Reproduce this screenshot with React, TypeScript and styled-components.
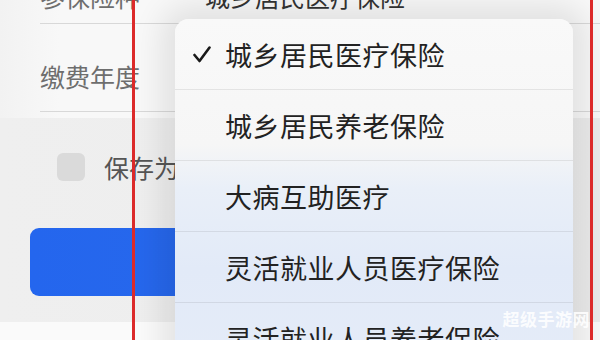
import React from "react";
import styled, { createGlobalStyle } from "styled-components";

const GlobalStyle = createGlobalStyle`
  html, body {
    margin: 0;
    padding: 0;
  }
  body {
    font-family: "Noto Sans CJK SC", "Noto Sans", sans-serif;
    background: #eeeeee;
  }
`;

const Screen = styled.div`
  position: relative;
  width: 600px;
  height: 340px;
  overflow: hidden;
  background: #eeeeee;
  display: flex;
  flex-direction: column;
`;

const FormCard = styled.div`
  margin-top: -32px;
  padding-bottom: 6px;
  background: linear-gradient(90deg, #f2f2f2 0px, #f8f8f8 60px, #f8f8f8 100%);
`;

const FieldRow = styled.div<{ $height: number; $offset?: number }>`
  display: flex;
  align-items: center;
  box-sizing: border-box;
  height: ${(p) => p.$height}px;
  padding-top: ${(p) => p.$offset ?? 0}px;
  padding-right: 52px;
  margin-left: 40px;
  border-bottom: 1px solid #d8d8d8;
`;

const Label = styled.span`
  flex-shrink: 0;
  width: 165px;
  font-size: 25px;
  color: #6e6e6e;
`;

const Value = styled.span`
  flex: 1;
  font-size: 25px;
  color: #333333;
`;

const OptionsArea = styled.div`
  display: flex;
  flex-direction: column;
  gap: 47px;
  padding: 35px 30px 26px;
  background: linear-gradient(90deg, #efefef 0px, #ececec 100%);
`;

const CheckRow = styled.label`
  display: flex;
  align-items: center;
  gap: 19px;
  height: 28px;
  padding-left: 27px;
`;

const Checkbox = styled.span`
  width: 28px;
  height: 28px;
  border-radius: 6px;
  background: #dadada;
`;

const CheckText = styled.span`
  font-size: 25px;
  color: #555555;
`;

const SubmitButton = styled.button`
  height: 68px;
  border: none;
  border-radius: 9px;
  background: linear-gradient(90deg, #2466ee 0%, #2d6be6 100%);
`;

const Footer = styled.div`
  flex: 1;
  background: #fafafa;
`;

const Menu = styled.div`
  position: absolute;
  left: 175px;
  top: 19px;
  width: 398px;
  height: 400px;
  border-radius: 14px;
  overflow: hidden;
  background: linear-gradient(
    180deg,
    #f9f9f9 0px,
    #f6f6f6 125px,
    #e9eff8 170px,
    #e2eaf8 250px,
    #e5ecf8 360px
  );
  box-shadow: 0 0 30px 14px rgba(0, 0, 0, 0.09);
`;

const MenuItem = styled.div`
  display: flex;
  align-items: center;
  height: 70px;
  padding-left: 18px;
  border-bottom: 1px solid rgba(0, 0, 0, 0.08);
`;

const CheckSlot = styled.span`
  display: flex;
  align-items: center;
  width: 32px;
  height: 20px;
`;

const ItemText = styled.span`
  font-size: 27px;
  letter-spacing: 0.5px;
  color: #222222;
`;

const Annotation = styled.div`
  position: absolute;
  left: 132px;
  top: -10px;
  width: 455px;
  height: 360px;
  border: 3px solid #dc2a2a;
  pointer-events: none;
`;

const Watermark = styled.div`
  position: absolute;
  right: 10px;
  bottom: 9px;
  font-size: 17px;
  font-weight: 700;
  letter-spacing: 0.5px;
  color: rgba(255, 255, 255, 0.88);
`;

const options = [
  "城乡居民医疗保险",
  "城乡居民养老保险",
  "大病互助医疗",
  "灵活就业人员医疗保险",
  "灵活就业人员养老保险",
];

const Check = () => (
  <svg width="18" height="17" viewBox="0 0 18 17">
    <polyline
      points="1.5,9 6.5,15 16.5,1.5"
      fill="none"
      stroke="#1a1a1a"
      strokeWidth="2.6"
      strokeLinecap="round"
      strokeLinejoin="round"
    />
  </svg>
);

const ChevronDown = () => (
  <svg width="14" height="10" viewBox="0 0 14 10">
    <polyline
      points="1.5,2 7,7.5 12.5,2"
      fill="none"
      stroke="#888"
      strokeWidth="2"
      strokeLinecap="round"
      strokeLinejoin="round"
    />
  </svg>
);

const App = () => {
  const selected = 0;

  return (
    <Screen>
      <GlobalStyle />
      <FormCard>
        <FieldRow $height={56}>
          <Label>参保险种</Label>
          <Value>城乡居民医疗保险</Value>
          <ChevronDown />
        </FieldRow>
        <FieldRow $height={88} $offset={16}>
          <Label>缴费年度</Label>
        </FieldRow>
      </FormCard>
      <OptionsArea>
        <CheckRow>
          <Checkbox />
          <CheckText>保存为常用信息</CheckText>
        </CheckRow>
        <SubmitButton />
      </OptionsArea>
      <Footer />

      <Menu>
        {options.map((option, i) => (
          <MenuItem key={option}>
            <CheckSlot>{i === selected && <Check />}</CheckSlot>
            <ItemText>{option}</ItemText>
          </MenuItem>
        ))}
      </Menu>

      <Annotation />
      <Watermark>超级手游网</Watermark>
    </Screen>
  );
};

export default App;
